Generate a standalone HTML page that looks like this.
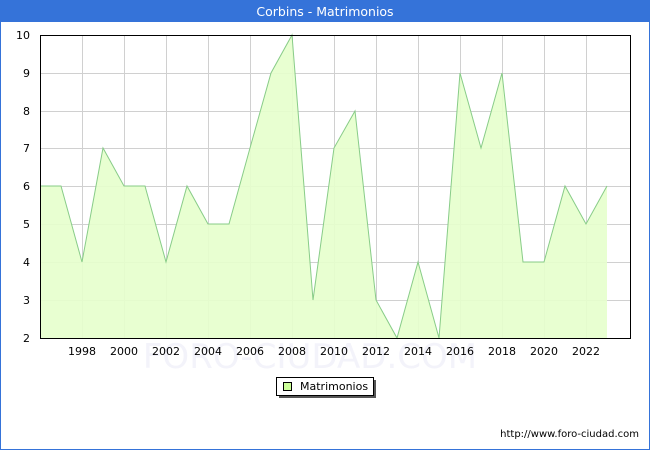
<!DOCTYPE html>
<html><head><style>
body{margin:0;width:650px;height:450px;overflow:hidden;font-family:"DejaVu Sans","Liberation Sans",sans-serif;}
</style></head><body>
<svg width="650" height="450" xmlns="http://www.w3.org/2000/svg" font-family="DejaVu Sans, Liberation Sans, sans-serif">
<rect x="0" y="0" width="650" height="450" fill="#3573d9"/>
<rect x="1" y="22" width="648" height="427" fill="#fff"/>
<text x="325" y="16" fill="#fff" font-size="12.5" text-anchor="middle">Corbins - Matrimonios</text>
<g stroke="#d0d0d0" stroke-width="1">
<line x1="40" y1="73.5" x2="630" y2="73.5"/><line x1="40" y1="111.5" x2="630" y2="111.5"/><line x1="40" y1="148.5" x2="630" y2="148.5"/><line x1="40" y1="186.5" x2="630" y2="186.5"/><line x1="40" y1="224.5" x2="630" y2="224.5"/><line x1="40" y1="262.5" x2="630" y2="262.5"/><line x1="40" y1="300.5" x2="630" y2="300.5"/>
<line x1="82.5" y1="35" x2="82.5" y2="338"/><line x1="124.5" y1="35" x2="124.5" y2="338"/><line x1="166.5" y1="35" x2="166.5" y2="338"/><line x1="208.5" y1="35" x2="208.5" y2="338"/><line x1="250.5" y1="35" x2="250.5" y2="338"/><line x1="292.5" y1="35" x2="292.5" y2="338"/><line x1="334.5" y1="35" x2="334.5" y2="338"/><line x1="376.5" y1="35" x2="376.5" y2="338"/><line x1="418.5" y1="35" x2="418.5" y2="338"/><line x1="460.5" y1="35" x2="460.5" y2="338"/><line x1="502.5" y1="35" x2="502.5" y2="338"/><line x1="544.5" y1="35" x2="544.5" y2="338"/><line x1="586.5" y1="35" x2="586.5" y2="338"/>
</g>
<polygon fill="#e6ffcc" fill-opacity="0.9" stroke="none" points="40,338 40,186 61,186 82,262 103,148 124,186 145,186 166,262 187,186 208,224 229,224 250,148 271,73 292,35 313,300 334,148 355,111 376,300 397,338 418,262 439,338 460,73 481,148 502,73 523,262 544,262 565,186 586,224 607,186 607,338"/>
<polyline fill="none" stroke="#88cc88" stroke-width="1" points="40,186 61,186 82,262 103,148 124,186 145,186 166,262 187,186 208,224 229,224 250,148 271,73 292,35 313,300 334,148 355,111 376,300 397,338 418,262 439,338 460,73 481,148 502,73 523,262 544,262 565,186 586,224 607,186"/>
<rect x="40.5" y="35.5" width="590" height="303" fill="none" stroke="#000"/>
<text x="310" y="368" font-size="34" fill="#eeeef8" text-anchor="middle" opacity="0.7">FORO-CIUDAD.COM</text>
<g font-size="11" fill="#000" text-anchor="end">
<text x="30" y="39">10</text><text x="30" y="77">9</text><text x="30" y="115">8</text><text x="30" y="152">7</text><text x="30" y="190">6</text><text x="30" y="228">5</text><text x="30" y="266">4</text><text x="30" y="304">3</text><text x="30" y="342">2</text>
</g>
<g font-size="11" fill="#000" text-anchor="middle">
<text x="82" y="355">1998</text><text x="124" y="355">2000</text><text x="166" y="355">2002</text><text x="208" y="355">2004</text><text x="250" y="355">2006</text><text x="292" y="355">2008</text><text x="334" y="355">2010</text><text x="376" y="355">2012</text><text x="418" y="355">2014</text><text x="460" y="355">2016</text><text x="502" y="355">2018</text><text x="544" y="355">2020</text><text x="586" y="355">2022</text>
</g>
<rect x="279" y="380" width="97" height="18" fill="#555"/>
<rect x="276.5" y="377.5" width="97" height="18" fill="#fff" stroke="#000"/>
<rect x="283.5" y="382.5" width="8" height="8" fill="#ccff99" stroke="#000"/>
<text x="300" y="390" font-size="11">Matrimonios</text>
<text x="639" y="437" font-size="10" text-anchor="end">http://www.foro-ciudad.com</text>
</svg>
</body></html>
